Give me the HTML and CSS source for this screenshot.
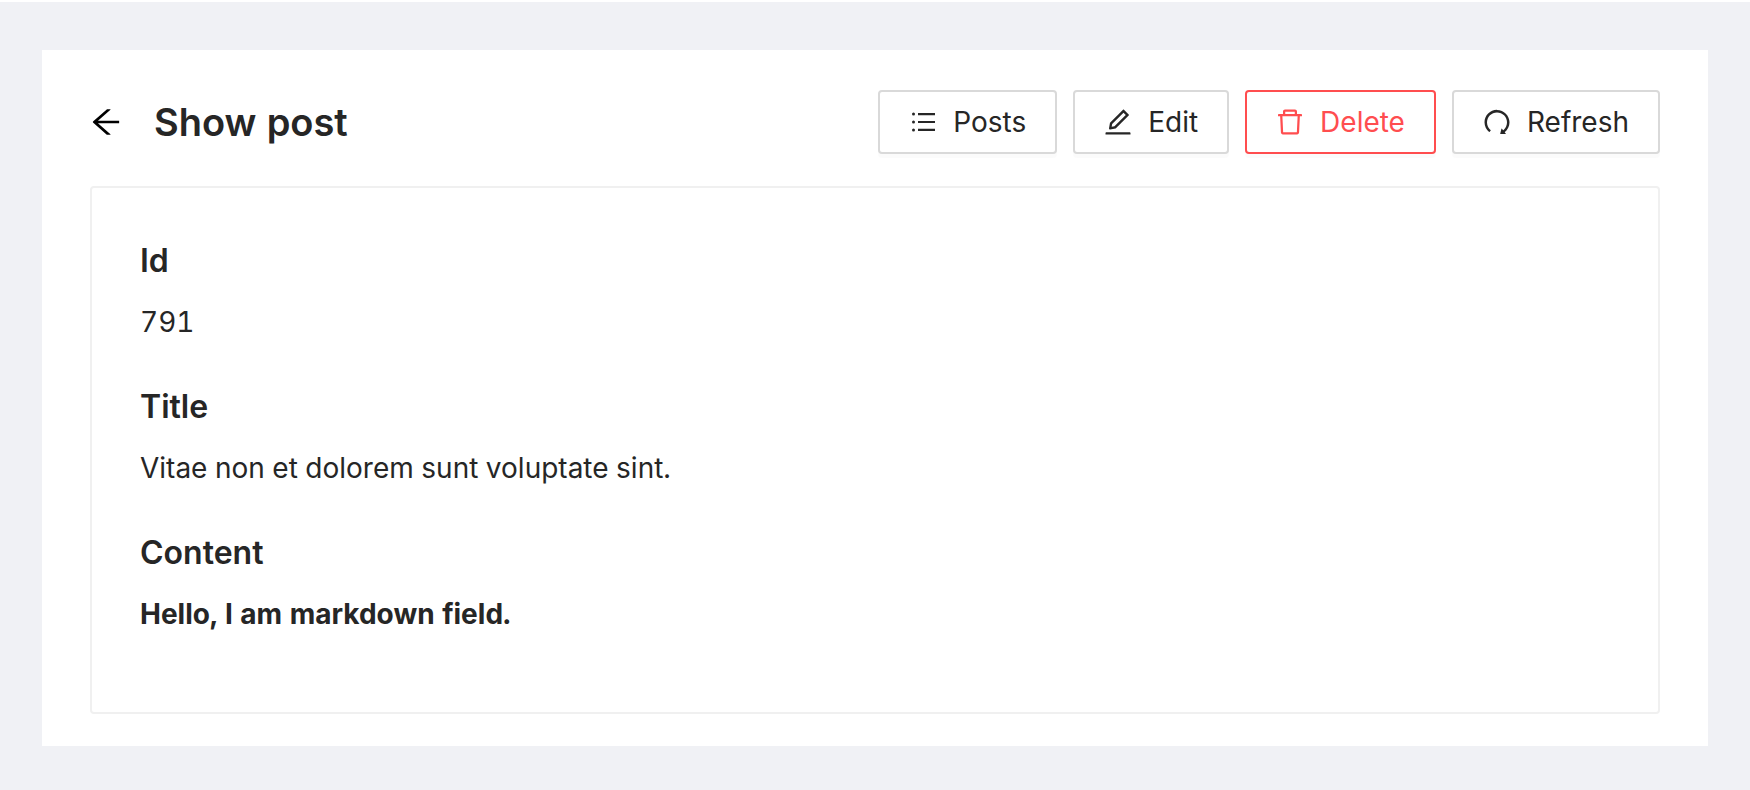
FILE: index.html
```html
<!DOCTYPE html>
<html lang="en">
<head>
<meta charset="utf-8">
<meta name="viewport" content="width=device-width, initial-scale=1">
<title>Show post</title>
<link rel="stylesheet" href="styles.css">
</head>
<body>
<main class="page">
  <header class="page-header">
    <div class="heading">
      <button class="back" type="button" aria-label="Back">
        <svg class="back-icon" viewBox="64 64 896 896" aria-hidden="true"><path d="M872 474H286.9l350.2-304c5.6-4.9 2.2-14-5.2-14h-88.5c-3.9 0-7.6 1.4-10.5 3.9L155 487.8a31.96 31.96 0 000 48.3L535.1 866c1.5 1.3 3.3 2 5.2 2h91.5c7.4 0 10.8-9.2 5.2-14L286.9 550H872c4.4 0 8-3.6 8-8v-60c0-4.4-3.6-8-8-8z"/></svg>
      </button>
      <h1 class="title">Show post</h1>
    </div>
    <div class="actions">
      <button class="btn" type="button">
        <svg class="icon" viewBox="0 0 28 28" aria-hidden="true"><path d="M9 5h17v2.200H9zM9 12.900h17v2.200H9zM9 20.800h17V23H9z"/><circle cx="4.500" cy="6.100" r="1.500"/><circle cx="4.500" cy="14" r="1.500"/><circle cx="4.500" cy="21.900" r="1.500"/></svg>
        <span>Posts</span>
      </button>
      <button class="btn" type="button">
        <svg class="icon" viewBox="64 64 896 896" aria-hidden="true"><path d="M257.7 752c2 0 4-.2 6-.5L431.9 722c2-.4 3.9-1.3 5.3-2.8l423.9-423.9a9.96 9.96 0 000-14.1L694.9 114.9c-1.9-1.9-4.4-2.9-7.1-2.9s-5.2 1-7.1 2.9L256.8 538.8c-1.5 1.5-2.4 3.3-2.8 5.3l-29.5 168.2a33.5 33.5 0 009.4 29.8c6.6 6.4 14.9 9.9 23.8 9.9zm67.4-174.4L687.8 215l73.3 73.3-362.7 362.6-88.9 15.7 15.6-89zM880 836H144c-17.7 0-32 14.3-32 32v36c0 4.4 3.6 8 8 8h784c4.4 0 8-3.6 8-8v-36c0-17.7-14.3-32-32-32z"/></svg>
        <span>Edit</span>
      </button>
      <button class="btn btn-danger" type="button">
        <svg class="icon" viewBox="64 64 896 896" aria-hidden="true"><path d="M360 184h-8c4.4 0 8-3.6 8-8v8h304v-8c0 4.4 3.6 8 8 8h-8v72h72v-80c0-35.3-28.7-64-64-64H352c-35.3 0-64 28.7-64 64v80h72v-72zm504 72H160c-17.7 0-32 14.3-32 32v32c0 4.4 3.6 8 8 8h60.4l24.7 523c1.6 34.1 29.8 61 63.9 61h454c34.2 0 62.3-26.8 63.9-61l24.7-523H888c4.4 0 8-3.6 8-8v-32c0-17.7-14.3-32-32-32zM731.3 840H292.7l-24.2-512h487l-24.2 512z"/></svg>
        <span>Delete</span>
      </button>
      <button class="btn" type="button">
        <svg class="icon" viewBox="64 64 896 896" aria-hidden="true"><path d="M758.2 839.1C851.8 765.9 912 651.9 912 523.9 912 303 733.5 124.3 512.6 124 291.4 123.7 112 302.8 112 523.9c0 125.2 57.5 236.9 147.6 310.2 3.5 2.8 8.6 2.2 11.4-1.3l39.4-50.5c2.7-3.4 2.1-8.3-1.2-11.1-8.1-6.6-15.9-13.7-23.4-21.2a318.64 318.64 0 01-68.6-101.7C200.4 609 192 567.1 192 523.9s8.4-85.1 25.1-124.5c16.1-38.1 39.2-72.3 68.6-101.7 29.4-29.4 63.6-52.5 101.7-68.6C426.9 212.4 468.8 204 512 204s85.1 8.4 124.5 25.1c38.1 16.1 72.3 39.2 101.7 68.6 29.4 29.4 52.5 63.6 68.6 101.7 16.7 39.4 25.1 81.3 25.1 124.5s-8.4 85.1-25.1 124.5a318.64 318.64 0 01-68.6 101.7c-9.3 9.3-19.1 18-29.3 26L668.2 724a8 8 0 00-14.1 3l-39.6 162.2c-1.2 5 2.6 9.9 7.7 9.9l167 .8c6.7 0 10.5-7.7 6.3-12.9l-37.3-47.9z"/></svg>
        <span>Refresh</span>
      </button>
    </div>
  </header>
  <section class="card">
    <div class="field">
      <h2 class="label">Id</h2>
      <p class="value">791</p>
    </div>
    <div class="field">
      <h2 class="label">Title</h2>
      <p class="value">Vitae non et dolorem sunt voluptate sint.</p>
    </div>
    <div class="field">
      <h2 class="label">Content</h2>
      <p class="value"><strong>Hello, I am markdown field.</strong></p>
    </div>
  </section>
</main>
</body>
</html>
```
FILE: styles.css
```css
* {
  box-sizing: border-box;
}

body {
  margin: 0;
  min-height: 100vh;
  padding: 48px 42px 44px;
  border-top: 2px solid #fff;
  background: #f0f1f5;
  color: #262626;
  font-family: Inter, "Liberation Sans", sans-serif;
  font-size: 28px;
  font-variant-numeric: tabular-nums;
  line-height: 44px;
}

h1,
h2,
p {
  margin: 0;
}

.page {
  padding: 40px 48px 32px;
  background: #fff;
}

.page-header {
  display: flex;
  flex-wrap: wrap;
  align-items: center;
  justify-content: space-between;
  gap: 16px;
}

.heading {
  display: flex;
  align-items: center;
  gap: 32px;
}

.back {
  display: flex;
  padding: 0;
  border: 0;
  background: none;
  color: #000;
  cursor: pointer;
}

.back-icon {
  width: 32px;
  height: 32px;
  fill: currentColor;
}

.title {
  font-size: 38px;
  font-weight: 600;
  line-height: 64px;
}

.actions {
  display: flex;
  flex-wrap: wrap;
  gap: 16px;
}

.btn {
  display: flex;
  align-items: center;
  gap: 16px;
  height: 64px;
  padding: 0 29px;
  border: 2px solid #d9d9d9;
  border-radius: 4px;
  background: #fff;
  box-shadow: 0 4px 0 rgba(0, 0, 0, 0.016);
  color: inherit;
  font: inherit;
  cursor: pointer;
}

.btn-danger {
  border-color: #ff4d4f;
  color: #ff4d4f;
}

.icon {
  width: 28px;
  height: 28px;
  fill: currentColor;
}

.card {
  display: grid;
  gap: 38px;
  margin-top: 32px;
  padding: 48px 48px 76px;
  border: 2px solid #f0f0f0;
  border-radius: 4px;
}

.label {
  margin-bottom: 14px;
  font-size: 32px;
  font-weight: 600;
  line-height: 50px;
}

strong {
  font-weight: 700;
}
```
